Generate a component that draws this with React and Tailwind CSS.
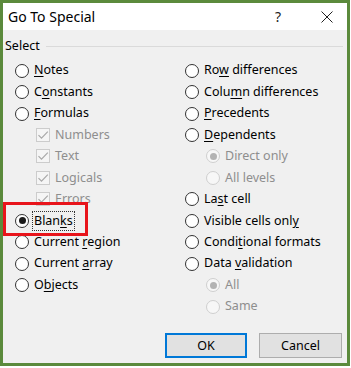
import React from "react";

// Mnemonic letter: underlined like a Windows accelerator key
function U({ children }) {
  return <span className="underline underline-offset-2 decoration-1">{children}</span>;
}

function Radio({ checked, disabled }) {
  return (
    <span
      className={`w-[14px] h-[14px] shrink-0 rounded-full border-[1.5px] flex items-center justify-center ${
        disabled ? "border-[#cfcfcf] bg-[#f7f7f7]" : "border-[#333333] bg-white"
      }`}
    >
      {checked && (
        <span className={`w-[7px] h-[7px] rounded-full ${disabled ? "bg-[#b3b3b3]" : "bg-[#1a1a1a]"}`} />
      )}
    </span>
  );
}

function Check() {
  return (
    <span className="w-[14px] h-[14px] shrink-0 border border-[#cccccc] bg-[#f5f5f5] flex items-center justify-center">
      <svg width="12" height="12" viewBox="0 0 12 12">
        <path d="M1.5 6.2 L4.5 9.2 L10.8 2.6" fill="none" stroke="#a8a8a8" strokeWidth="1.2" />
      </svg>
    </span>
  );
}

function Row({ children, kind = "radio", sub = false, checked = false, disabled = false }) {
  return (
    <div className={`h-[21.45px] flex items-center gap-[5px] ${sub ? "pl-[21px]" : ""}`}>
      {kind === "check" ? <Check /> : <Radio checked={checked} disabled={disabled} />}
      <span className={disabled ? "text-[#8e8e8e]" : "text-black"}>{children}</span>
    </div>
  );
}

export default function App() {
  return (
    <div className="w-[351px] h-[368px] bg-white" style={{ fontFamily: '"Noto Sans", "Open Sans", sans-serif' }}>
      <div className="relative w-[350px] h-[366px] border-[3px] border-[#5b8a3c] bg-[#f0f0f0] flex flex-col text-[12.5px] leading-none">
        {/* title bar */}
        <div className="h-[27px] bg-white flex items-center pl-[5px] shrink-0">
          <span className="text-[14px] text-black flex-1">Go To Special</span>
          <span className="text-[14px] text-[#222] mr-[40px]">?</span>
          <svg width="12" height="12" viewBox="0 0 12 12" className="mr-[14px]">
            <path d="M0.5 0.5 L11.5 11.5 M11.5 0.5 L0.5 11.5" stroke="#222" strokeWidth="1" />
          </svg>
        </div>

        {/* group label */}
        <div className="h-[30px] flex items-center pl-[2px] pr-[4px] gap-[6px] shrink-0 pt-[2px]">
          <span className="text-black">Select</span>
          <span className="flex-1 h-px bg-[#dadada]" />
        </div>

        <div className="grid grid-cols-[170px_1fr] pl-[12px]">
          <div className="flex flex-col">
            <Row><U>N</U>otes</Row>
            <Row>C<U>o</U>nstants</Row>
            <Row><U>F</U>ormulas</Row>
            <Row kind="check" sub disabled>Numbers</Row>
            <Row kind="check" sub disabled>Text</Row>
            <Row kind="check" sub disabled>Logicals</Row>
            <Row kind="check" sub disabled>Errors</Row>
            <div className="h-[21.45px] flex items-center gap-[3px]">
              <Radio checked />
              <span className="border border-dotted border-[#333] px-[1px] py-[3px] text-black">
                Blan<U>k</U>s
              </span>
            </div>
            <Row>Current <U>r</U>egion</Row>
            <Row>Current <U>a</U>rray</Row>
            <Row>O<U>b</U>jects</Row>
          </div>
          <div className="flex flex-col">
            <Row>Ro<U>w</U> differences</Row>
            <Row>Colu<U>m</U>n differences</Row>
            <Row><U>P</U>recedents</Row>
            <Row><U>D</U>ependents</Row>
            <Row sub checked disabled>Direct only</Row>
            <Row sub disabled>All levels</Row>
            <Row>La<U>s</U>t cell</Row>
            <Row>Visible cells onl<U>y</U></Row>
            <Row>Condi<U>t</U>ional formats</Row>
            <Row>Data <U>v</U>alidation</Row>
            <Row sub checked disabled>All</Row>
            <Row sub disabled>Same</Row>
          </div>
        </div>

        {/* buttons */}
        <div className="flex justify-end gap-[12px] pr-[5px] mt-[16px]">
          <button className="w-[82px] h-[25px] bg-[#e1e1e1] border-2 border-[#0078d7] text-black text-[12.5px]">OK</button>
          <button className="w-[83px] h-[25px] bg-[#e1e1e1] border border-[#adadad] text-black text-[12.5px]">Cancel</button>
        </div>

        {/* red highlight around Blanks */}
        <div className="absolute left-0 top-[199px] w-[85px] h-[34px] border-[3px] border-[#e8141b]" />
      </div>
    </div>
  );
}
